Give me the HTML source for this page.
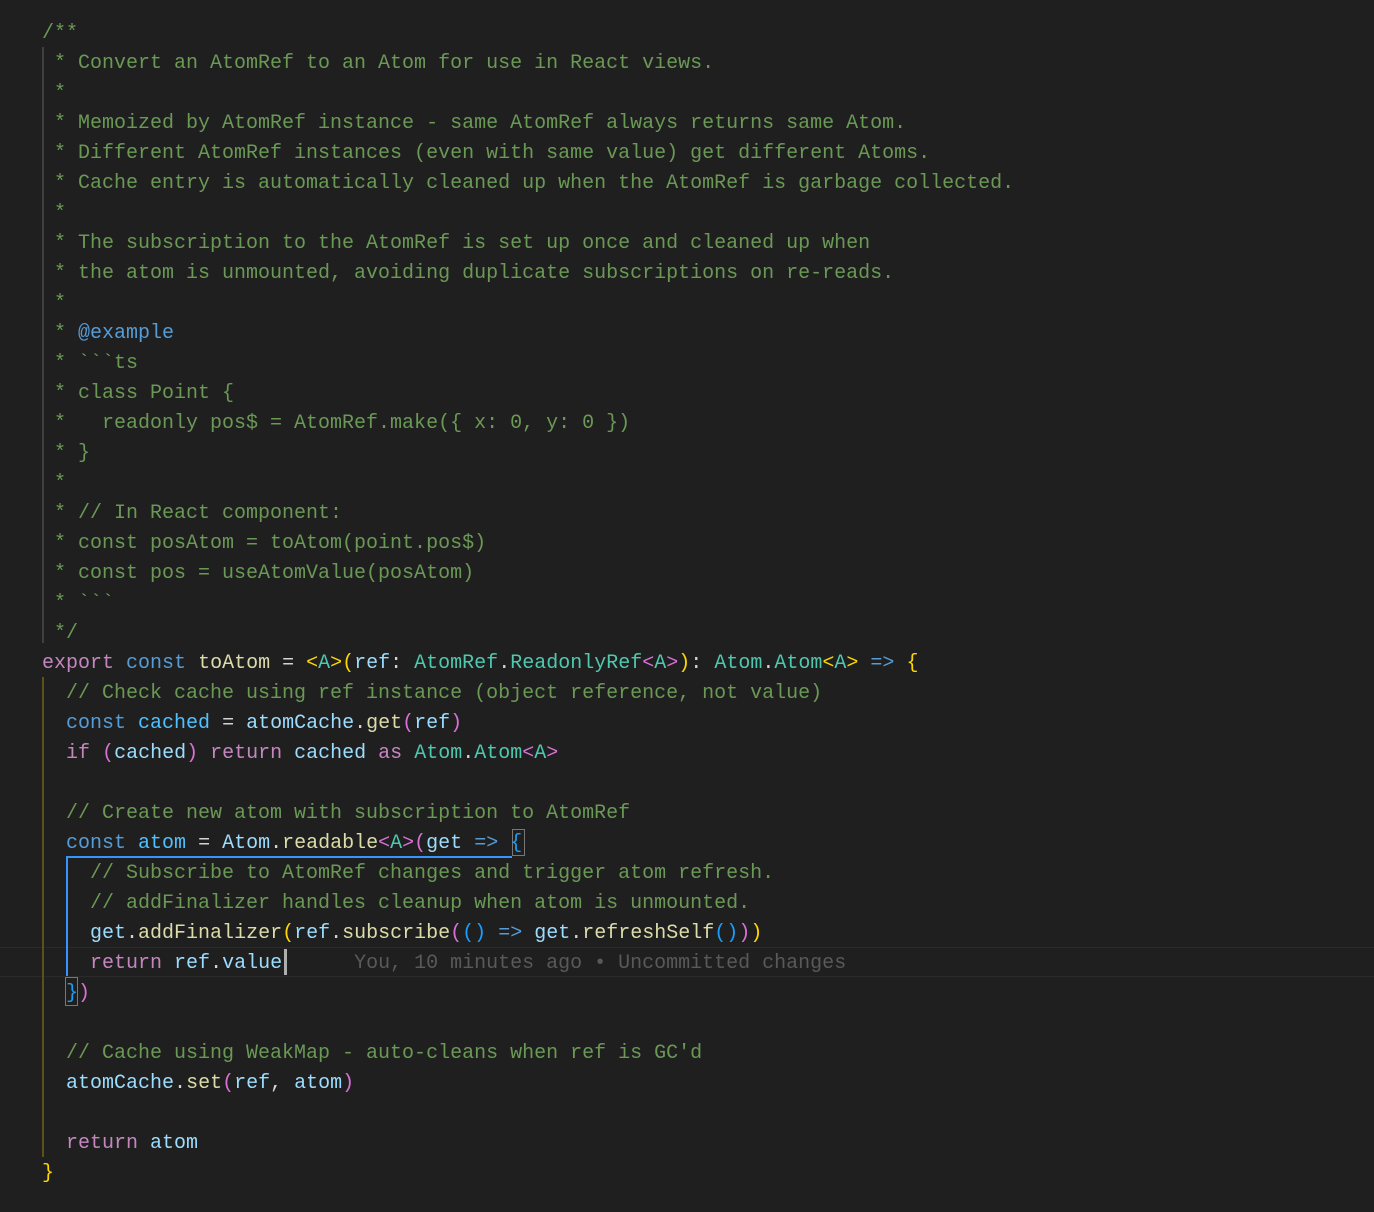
<!DOCTYPE html>
<html><head><meta charset="utf-8"><style>
html,body{margin:0;padding:0;background:#1f1f1f;width:1374px;height:1212px;overflow:hidden}
.l{position:absolute;left:42px;height:30px;line-height:30px;font-family:"Liberation Mono",monospace;font-size:20px;white-space:pre;color:#d4d4d4;margin-top:2px}
.c{color:#6a9955}.k{color:#569cd6}.p{color:#c586c0}.f{color:#dcdcaa}.v{color:#9cdcfe}.t{color:#4ec9b0}
.y{color:#ffd700}.m{color:#da70d6}.b{color:#179fff}.g{color:#595959}
.abs{position:absolute}
</style></head><body>
<div class="abs" style="left:0;top:947px;width:1374px;height:28px;border-top:1px solid #2a2a2a;border-bottom:1px solid #2a2a2a"></div>
<div class="abs" style="left:42px;top:47px;width:2px;height:596px;background:#404040"></div>
<div class="abs" style="left:42px;top:677px;width:2px;height:480px;background:#5c5218"></div>
<div class="abs" style="left:66px;top:856px;width:2px;height:120px;background:#3794ff"></div>
<div class="abs" style="left:66px;top:856px;width:446px;height:2px;background:#3794ff"></div>
<div class="abs" style="left:512px;top:829px;width:11px;height:25px;border:1px solid #777"></div>
<div class="abs" style="left:65px;top:977px;width:11px;height:27px;border:1px solid #777"></div>
<div class="abs" style="left:284px;top:949px;width:3px;height:26px;background:#aeafad"></div>
<div class="l c" style="top:17px">/**</div>
<div class="l c" style="top:47px"> * Convert an AtomRef to an Atom for use in React views.</div>
<div class="l c" style="top:77px"> *</div>
<div class="l c" style="top:107px"> * Memoized by AtomRef instance - same AtomRef always returns same Atom.</div>
<div class="l c" style="top:137px"> * Different AtomRef instances (even with same value) get different Atoms.</div>
<div class="l c" style="top:167px"> * Cache entry is automatically cleaned up when the AtomRef is garbage collected.</div>
<div class="l c" style="top:197px"> *</div>
<div class="l c" style="top:227px"> * The subscription to the AtomRef is set up once and cleaned up when</div>
<div class="l c" style="top:257px"> * the atom is unmounted, avoiding duplicate subscriptions on re-reads.</div>
<div class="l c" style="top:287px"> *</div>
<div class="l c" style="top:317px"> * <span class="k">@example</span></div>
<div class="l c" style="top:347px"> * &#96;&#96;&#96;ts</div>
<div class="l c" style="top:377px"> * class Point {</div>
<div class="l c" style="top:407px"> *   readonly pos$ = AtomRef.make({ x: 0, y: 0 })</div>
<div class="l c" style="top:437px"> * }</div>
<div class="l c" style="top:467px"> *</div>
<div class="l c" style="top:497px"> * // In React component:</div>
<div class="l c" style="top:527px"> * const posAtom = toAtom(point.pos$)</div>
<div class="l c" style="top:557px"> * const pos = useAtomValue(posAtom)</div>
<div class="l c" style="top:587px"> * &#96;&#96;&#96;</div>
<div class="l c" style="top:617px"> */</div>
<div class="l" style="top:647px"><span class="p">export</span> <span class="k">const</span> <span class="f">toAtom</span> = <span class="y">&lt;</span><span class="t">A</span><span class="y">&gt;(</span><span class="v">ref</span>: <span class="t">AtomRef</span>.<span class="t">ReadonlyRef</span><span class="m">&lt;</span><span class="t">A</span><span class="m">&gt;</span><span class="y">)</span>: <span class="t">Atom</span>.<span class="t">Atom</span><span class="y">&lt;</span><span class="t">A</span><span class="y">&gt;</span> <span class="k">=&gt;</span> <span class="y">{</span></div>
<div class="l c" style="top:677px">  // Check cache using ref instance (object reference, not value)</div>
<div class="l" style="top:707px">  <span class="k">const</span> <span class="v" style="color:#4fc1ff">cached</span> = <span class="v">atomCache</span>.<span class="f">get</span><span class="m">(</span><span class="v">ref</span><span class="m">)</span></div>
<div class="l" style="top:737px">  <span class="p">if</span> <span class="m">(</span><span class="v">cached</span><span class="m">)</span> <span class="p">return</span> <span class="v">cached</span> <span class="p">as</span> <span class="t">Atom</span>.<span class="t">Atom</span><span class="m">&lt;</span><span class="t">A</span><span class="m">&gt;</span></div>
<div class="l c" style="top:797px">  // Create new atom with subscription to AtomRef</div>
<div class="l" style="top:827px">  <span class="k">const</span> <span class="v" style="color:#4fc1ff">atom</span> = <span class="v">Atom</span>.<span class="f">readable</span><span class="m">&lt;</span><span class="t">A</span><span class="m">&gt;(</span><span class="v">get</span> <span class="k">=&gt;</span> <span class="b">{</span></div>
<div class="l c" style="top:857px">    // Subscribe to AtomRef changes and trigger atom refresh.</div>
<div class="l c" style="top:887px">    // addFinalizer handles cleanup when atom is unmounted.</div>
<div class="l" style="top:917px">    <span class="v">get</span>.<span class="f">addFinalizer</span><span class="y">(</span><span class="v">ref</span>.<span class="f">subscribe</span><span class="m">(</span><span class="b">()</span> <span class="k">=&gt;</span> <span class="v">get</span>.<span class="f">refreshSelf</span><span class="b">()</span><span class="m">)</span><span class="y">)</span></div>
<div class="l" style="top:947px">    <span class="p">return</span> <span class="v">ref</span>.<span class="v">value</span>      <span class="g">You, 10 minutes ago • Uncommitted changes</span></div>
<div class="l" style="top:977px">  <span class="b">}</span><span class="m">)</span></div>
<div class="l c" style="top:1037px">  // Cache using WeakMap - auto-cleans when ref is GC'd</div>
<div class="l" style="top:1067px">  <span class="v">atomCache</span>.<span class="f">set</span><span class="m">(</span><span class="v">ref</span>, <span class="v">atom</span><span class="m">)</span></div>
<div class="l" style="top:1127px">  <span class="p">return</span> <span class="v">atom</span></div>
<div class="l" style="top:1157px"><span class="y">}</span></div>
</body></html>
